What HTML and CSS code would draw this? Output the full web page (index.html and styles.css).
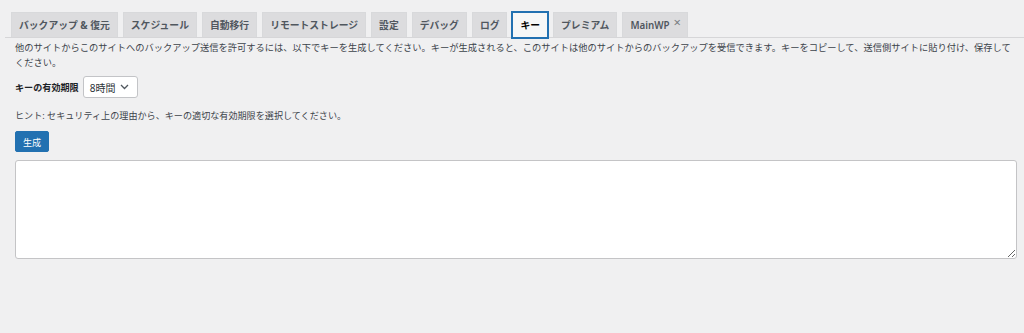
FILE: index.html
```html
<!DOCTYPE html>
<html lang="ja">
<head>
<meta charset="utf-8">
<title>キー</title>
<link rel="stylesheet" href="styles.css">
</head>
<body>
<div class="wrap">
  <nav class="tabs">
    <a class="tab">バックアップ &amp; 復元</a>
    <a class="tab">スケジュール</a>
    <a class="tab">自動移行</a>
    <a class="tab">リモートストレージ</a>
    <a class="tab">設定</a>
    <a class="tab">デバッグ</a>
    <a class="tab">ログ</a>
    <a class="tab tab-active">キー</a>
    <a class="tab">プレミアム</a>
    <a class="tab tab-mainwp">MainWP<span class="tab-x">×</span></a>
  </nav>
  <div class="content">
    <p class="intro">他のサイトからこのサイトへのバックアップ送信を許可するには、以下でキーを生成してください。キーが生成されると、このサイトは他のサイトからのバックアップを受信できます。キーをコピーして、送信側サイトに貼り付け、保存してください。</p>
    <div class="expiry">
      <label class="expiry-label">キーの有効期限</label>
      <div class="select">
        <span class="select-value">8時間</span>
        <svg class="chev" width="9" height="6" viewBox="0 0 9 6"><path d="M1 1 L4.5 4.5 L8 1" fill="none" stroke="#50575e" stroke-width="1.3"/></svg>
      </div>
    </div>
    <p class="hint">ヒント: セキュリティ上の理由から、キーの適切な有効期限を選択してください。</p>
    <button class="btn">生成</button>
    <textarea class="keybox"></textarea>
  </div>
</div>
</body>
</html>
```
FILE: styles.css
```css
html, body {
  margin: 0;
  padding: 0;
  background: #f0f0f1;
  font-family: "Noto Sans", "Noto Sans CJK JP", sans-serif;
  color: #3c434a;
}
.wrap {
  padding-top: 12px;
}
.tabs {
  display: flex;
  gap: 5px;
  margin-left: 5px;
  padding-left: 6px;
  border-bottom: 1px solid #d6d6d8;
  height: 25px;
  align-items: flex-end;
}
.tab {
  box-sizing: border-box;
  height: 25px;
  display: flex;
  align-items: center;
  padding: 0 7px;
  background: #dcdcde;
  color: #50575e;
  border: 1px solid #d8d9db;
  border-bottom: none;
  font-size: 9.8px;
  font-weight: 700;
  white-space: nowrap;
}
.tab-mainwp {
  font-weight: 600;
  padding-right: 6px;
}
.tab-active {
  background: #f6f7f7;
  color: #000;
  border: 1px solid #2271b1;
  box-shadow: 0 0 0 1px #2271b1;
  height: 26px;
  margin-bottom: -1px;
}
.tab-x {
  font-weight: 400;
  font-size: 13px;
  line-height: 1;
  margin-left: 4px;
  color: #787c82;
  position: relative;
  top: -3px;
}
.content {
  padding: 0 7px 0 15px;
}
.intro {
  margin: 3px 0 0;
  font-size: 9.25px;
  line-height: 14.5px;
}
.expiry {
  display: flex;
  align-items: center;
  gap: 4px;
  margin-top: 6px;
}
.expiry-label {
  font-size: 9.1px;
  font-weight: 700;
  color: #1d2327;
}
.select {
  box-sizing: border-box;
  width: 55px;
  height: 22px;
  background: #fff;
  border: 1px solid #c3c4c7;
  border-radius: 3px;
  display: flex;
  align-items: center;
  justify-content: space-between;
  padding: 0 8px 0 6px;
  font-size: 10px;
  color: #2c3338;
}
.chev {
  display: block;
}
.hint {
  margin: 11px 0 0;
  font-size: 9.1px;
  line-height: 14px;
}
.btn {
  display: block;
  margin-top: 8px;
  box-sizing: border-box;
  width: 34px;
  height: 21px;
  padding: 0;
  background: #2271b1;
  color: #fff;
  border: 1px solid #2271b1;
  border-radius: 2px;
  font-family: "Noto Sans", "Noto Sans CJK JP", sans-serif;
  font-size: 9.1px;
}
.keybox {
  display: block;
  box-sizing: border-box;
  margin-top: 8px;
  width: 100%;
  height: 99px;
  background: #fff;
  border: 1px solid #c4c4c6;
  border-radius: 3px;
  resize: both;
}
```
